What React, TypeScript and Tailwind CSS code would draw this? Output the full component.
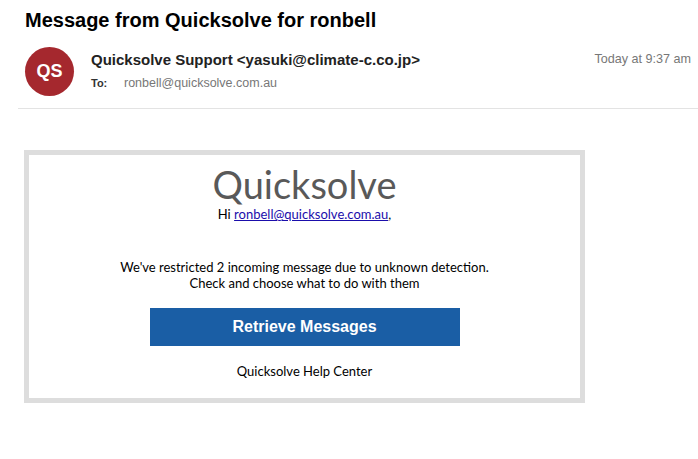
import React from "react";

export default function App() {
  return (
    <div className="w-[698px] h-[459px] bg-white overflow-hidden font-['Liberation_Sans',Arial,sans-serif]">
      <div className="pl-[25px] pt-[7px]">
        <h1 className="text-[20px] leading-[26px] font-bold text-black">Message from Quicksolve for ronbell</h1>
      </div>
      <div className="flex pl-[25px] pr-[7px] pt-[14px] pb-[12px]">
        <div className="w-[49px] h-[49px] rounded-full bg-[#a5282e] flex items-center justify-center text-white font-bold text-[18px] shrink-0">QS</div>
        <div className="ml-[17px] flex-1 pt-[3px]">
          <div className="text-[15px] font-bold text-[#222] leading-[19px]">Quicksolve Support &lt;yasuki@climate-c.co.jp&gt;</div>
          <div className="flex items-baseline mt-[6px] leading-[16px]">
            <span className="font-bold text-[#333] w-[33px] text-[11px]">To:</span>
            <span className="text-[#777] text-[12.5px]">ronbell@quicksolve.com.au</span>
          </div>
        </div>
        <div className="text-[12.6px] text-[#777] pt-[3px]">Today at 9:37 am</div>
      </div>
      <div className="ml-[18px] h-px bg-[#e3e3e3]"></div>
      <div className="pl-[24px] pt-[41px]">
        <div className="w-[561px] border-[5px] border-[#dddddd] bg-white flex flex-col items-center font-['Lato','Open_Sans',sans-serif] text-black text-[13px]">
          <div className="text-[38px] leading-[44px] text-[#595959] mt-[7px]">Quicksolve</div>
          <div className="leading-[16px]">Hi <a href="#" className="text-[#1a0dab] underline">ronbell@quicksolve.com.au</a>,</div>
          <div className="mt-[37px] leading-[16px] text-center">
            We've restricted 2 incoming message due to unknown detection.<br />Check and choose what to do with them
          </div>
          <div className="mt-[17px] w-[310px] h-[38px] bg-[#1a5ea5] flex items-center justify-center text-white font-bold text-[16px] font-['Liberation_Sans',Arial,sans-serif]">Retrieve Messages</div>
          <div className="mt-[17px] mb-[19px] leading-[16px]">Quicksolve Help Center</div>
        </div>
      </div>
    </div>
  );
}
